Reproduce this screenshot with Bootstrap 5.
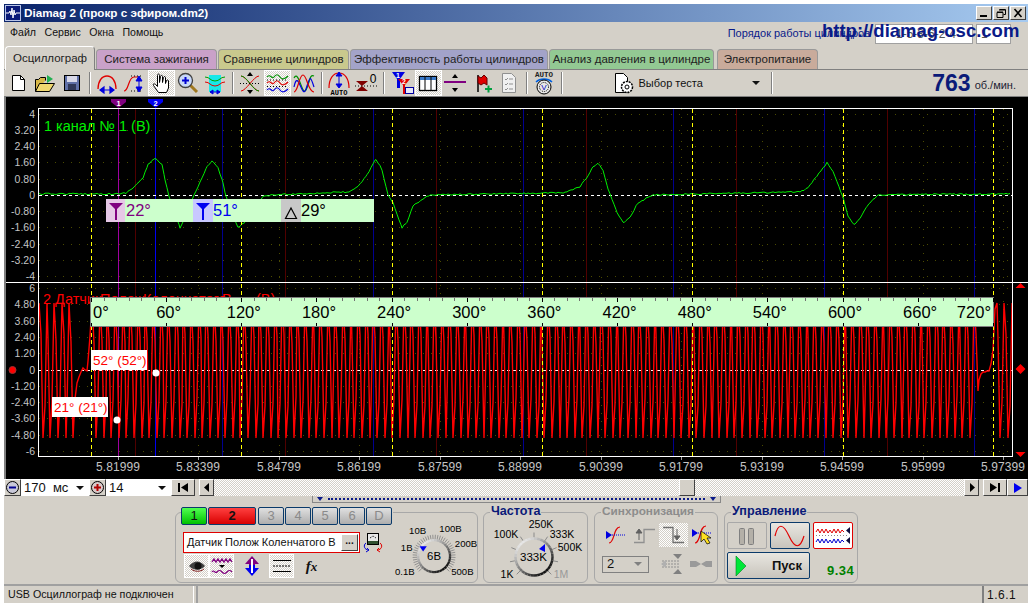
<!DOCTYPE html>
<html lang="ru">
<head>
    <meta charset="UTF-8">
    <title>Diamag 2</title>
    <link href="https://cdn.jsdelivr.net/npm/bootstrap@5.3.0/dist/css/bootstrap.min.css" rel="stylesheet">
    <style>
        html, body { background: #fff; overflow: hidden; }
        body { margin: 0; font-family: "Liberation Sans", Arial, sans-serif; font-size: 11px; color: #111; }
        svg { display: block; }
        .app-win { width: 1024px; height: 599px; margin: 4px 0 0 4px; background: #d4d0c8; position: relative; overflow: hidden; }
        .title-bar { height: 18px; background: linear-gradient(90deg, #0a246a, #a6caf0); color: #fff; font-weight: 700; font-size: 11.7px; padding-left: 1px; }
        .title-ico { width: 16px; height: 16px; margin-right: 3px; }
        .win-btn { width: 16px; height: 14px; background: #d4d0c8; border: 1px solid; border-color: #fff #404040 #404040 #fff; margin-right: 1px; }
        .win-btns { margin-right: 1px; }
        .menu-bar { height: 22px; padding-left: 6px; font-size: 10.600px; }
        .menu-item { margin-right: 8.500px; }
        .order-lbl { color: #0a1a88; margin-left: auto; margin-right: 5px; font-size: 11px; }
        .order-sel { height: 20px; background: #fff; color: #555; border: 1px solid #a0a0a0; padding: 0 4px; font-size: 12px; margin-top: 1px; }
        .order-a { width: 98px; margin-right: 3px; padding-left: 20px; }
        .order-b { width: 35px; margin-right: 17px; }
        .site-url { position: absolute; left: 818px; top: 14px; font-size: 18.500px; font-weight: 700; color: #0a1a88; line-height: 26px; white-space: nowrap; }
        .tab-row { height: 26px; padding: 3px 0 0 1px; gap: 1px; border-bottom: 1px solid #808080; }
        .tab-item { height: 20px; margin-top: 2px; border: 1px solid #999; border-bottom: 0; border-radius: 4px 4px 0 0; text-align: center; line-height: 19px; font-size: 11.500px; color: #222; white-space: nowrap; }
        .tab-on { height: 24px; margin-top: -1px; margin-bottom: -1px; width: 90px; background: #d4d0c8; border-color: #fff #808080 #d4d0c8 #fff; line-height: 23px; z-index: 1; }
        .tab-ign { width: 121px; background: #c9a1c9; }
        .tab-cmp { width: 131px; background: #c9c98d; }
        .tab-eff { width: 198px; background: #a3a3c9; }
        .tab-prs { width: 165px; background: #93c993; }
        .tab-pwr { width: 101px; background: #c9ab9b; margin-left: 2px; }
        .tool-bar { height: 27px; padding-left: .5px; border-bottom: 1px solid #808080; }
        .tb-btn { width: 27px; height: 26px; flex: none; display: flex; align-items: center; justify-content: center; }
        .tb-on { border: 1px solid; border-color: #fff; background-color: #fff; background-image: repeating-conic-gradient(#fff 0 25%, #d4d0c8 0 50%); background-size: 2px 2px; }
        .tb-sep { width: 8px; height: 26px; flex: none; position: relative; }
        .tb-sep::after { content: ""; display: block; width: 2px; height: 22px; margin: 2px 0 0 3px; border-left: 1px solid #808080; border-right: 1px solid #fff; }
        .test-pick { width: 202px; height: 26px; flex: none; padding-left: 46px; font-size: 11px; }
        .test-txt { margin-left: 3px; }
        .arr-dn { width: 0; height: 0; border: 4px solid transparent; border-top-color: #111; border-bottom: 0; flex: none; }
        .rpm-num { font-size: 23px; font-weight: 700; color: #0a1a78; margin-left: auto; line-height: 26px; }
        .rpm-unit { color: #223; margin: 5px 12px 0 4px; font-size: 11px; }
        .scope-box { height: 382px; background: #000; }
        .scroll-row { height: 17px; }
        .sb-btn { height: 17px; background: #d4d0c8; border: 1px solid; border-color: #fff #404040 #404040 #fff; flex: none; display: flex; align-items: center; justify-content: center; padding: 0; }
        .sb-round { width: 17px; }
        .sb-combo { height: 17px; background: #fff; font-size: 13px; padding: 0 5px 0 3px; flex: none; }
        .combo-a { width: 68px; }
        .combo-b { width: 65px; }
        .sb-wide { width: 24px; }
        .sb-thin { width: 15px; }
        .sb-play { width: 21px; }
        .sb-track { flex: 1 1 auto; height: 17px; position: relative; background-image: repeating-conic-gradient(#fff 0 25%, #d4d0c8 0 50%); background-size: 2px 2px; }
        .sb-thumb { position: absolute; left: 465px; top: 0; width: 16px; height: 17px; background: #d4d0c8; border: 1px solid; border-color: #fff #404040 #404040 #fff; }
        .panel-area { height: 88px; }
        .split-strip { width: 409px; height: 7px; margin-left: 308px; border: 1px solid #888; border-top: 0; padding: 0 4px; gap: 5px; }
        .split-dots { flex: 1 1 auto; border-top: 2px dotted #0a1a88; height: 0; }
        .arr-navy { width: 0; height: 0; border: 3px solid transparent; border-top: 4px solid #0a1a88; border-bottom: 0; flex: none; }
        .grp-row { margin: 9px 0 0 171px; gap: 6px; }
        .grp-box { position: relative; height: 71px; border: 1px solid #a8a8a8; border-radius: 6px; flex: none; }
        .grp-chan { width: 303px; margin-right: -1px; }
        .grp-freq { width: 105px; }
        .grp-sync { width: 124px; }
        .grp-ctrl { width: 134px; }
        .grp-title { position: absolute; top: -9px; left: 6px; background: #d4d0c8; padding: 0 1px; font-weight: 700; font-size: 12.600px; line-height: 15px; color: #0a1a78; white-space: nowrap; }
        .title-off { color: #8c8c8c; font-size: 11.800px; }
        .chan-col { width: 217px; flex: none; padding-left: 5px; }
        .chan-row { margin-top: -6px; gap: 1px; height: 18px; background: #d4d0c8; }
        .chan-btn { width: 26px; height: 18px; padding: 0; line-height: 16px; font-size: 13px; border: 1px solid #0a3a6a; border-radius: 2px; color: #8a8a8a; background: linear-gradient(#e0e0e0, #aeaeae); flex: none; }
        .chan-a { background: linear-gradient(#50ff50, #00c000); color: #111; }
        .chan-b { width: 48px; background: linear-gradient(#ff4040, #d80000); color: #111; font-weight: 700; margin-right: 1px; }
        .sensor-line { margin-top: 7px; margin-left: 2px; gap: 3px; }
        .sensor-box { width: 177px; height: 21px; border: 1px solid #e00000; padding-left: 3px; background: #fff; font-size: 11px; white-space: nowrap; flex: none; }
        .dots-btn { width: 17px; height: 17px; margin-left: auto; margin-right: 1px; background: #d4d0c8; border: 1px solid; border-color: #fff #404040 #404040 #fff; text-align: center; font-size: 10px; font-weight: 700; line-height: 11px; }
        .ch-icons { margin: 1px 0 0 3px; height: 24px; }
        .ch-ico { width: 25px; height: 24px; flex: none; display: flex; align-items: center; justify-content: center; }
        .ch-gap { margin-left: 5px; }
        .fx-mark { font-family: "Liberation Serif", serif; font-weight: 700; font-style: italic; font-size: 15px; }
        .sync-row { height: 24px; padding-left: 7px; margin-top: 10px; }
        .sync-row2 { margin-top: 5px; }
        .sync-ico { width: 28.500px; height: 24px; flex: none; display: flex; align-items: center; justify-content: center; }
        .sync-on { background-image: repeating-conic-gradient(#fff 0 25%, #d4d0c8 0 50%); background-size: 2px 2px; }
        .sync-sel { width: 47px; height: 17px; border: 1px solid #808080; padding: 0 6px 0 4px; margin-right: 9px; font-size: 13px; flex: none; }
        .arr-gray { border-top-color: #808080; }
        .ctrl-top { padding: 9px 0 0 2px; gap: 3px; }
        .ctrl-btn { width: 40px; height: 27px; border-radius: 2px; flex: none; display: flex; align-items: center; justify-content: center; }
        .ctrl-off { border: 1px solid #a8a8a8; }
        .ctrl-on { border: 1px solid #0a3a6a; background: linear-gradient(#e8e6e0, #c8c4bc); }
        .ctrl-red { border: 1px solid #e00000; background: #fff; }
        .ctrl-bot { padding: 3px 0 0 2px; }
        .start-btn { width: 83px; height: 27px; border: 1px solid #0a3a6a; border-radius: 2px; background: linear-gradient(#e8e6e0, #c8c4bc); font-weight: 700; font-size: 13px; padding: 0 0 0 7px; flex: none; }
        .start-txt { margin-left: 25px; }
        .time-val { color: #008000; font-weight: 700; font-size: 13px; letter-spacing: .5px; margin: 9px 0 0 17px; }
        .status-bar { height: 19px; border-top: 2px solid #a0a0a0; font-size: 10.700px; }
        .stat-a { width: 190px; padding-left: 4px; border-right: 1px solid #fff; white-space: nowrap; flex: none; }
        .stat-b { flex: 1 1 auto; border-left: 2px solid #a0a0a0; margin-left: 2px; height: 17px; }
        .stat-c { width: 46px; padding-left: 3px; border-left: 2px solid #808080; font-size: 12px; letter-spacing: .5px; }
    </style>
</head>
<body>
<div class="app-win d-flex flex-column">

    <div class="title-bar d-flex align-items-center">
        <svg class="title-ico" viewBox="0 0 16 16"><rect x=".5" y=".5" width="15" height="15" fill="#0a1a78" stroke="#b8c4e8"/><path d="M1 8h3l1-2 1 4 1-7 1 10 1-8 1 5 1-2h4" fill="none" stroke="#fff"/></svg>
        <span>Diamag 2 (прокр с эфиром.dm2)</span>
        <div class="win-btns d-flex ms-auto">
            <div class="win-btn"><svg width="14" height="12"><rect x="3" y="8" width="7" height="2" fill="#000"/></svg></div>
            <div class="win-btn"><svg width="14" height="12"><path d="M5.500 2.500h6v5h-2M3 5.500h6v5H3zM3 5h6M5 3h6" fill="none" stroke="#000"/></svg></div>
            <div class="win-btn"><svg width="14" height="12"><path d="M3.500 2l7 8M10.500 2l-7 8" stroke="#000" stroke-width="1.600"/></svg></div>
        </div>
    </div>

    <div class="menu-bar d-flex align-items-center">
        <span class="menu-item">Файл</span><span class="menu-item">Сервис</span><span class="menu-item">Окна</span><span class="menu-item">Помощь</span>
        <span class="order-lbl">Порядок работы цилиндров</span>
        <div class="order-sel order-a">1-5-3-6-2-4</div>
        <div class="order-sel order-b">1</div>
    </div>
    <div class="site-url">http://diamag-osc.com</div>

    <div class="tab-row d-flex">
        <div class="tab-item tab-on">Осциллограф</div>
        <div class="tab-item tab-ign">Система зажигания</div>
        <div class="tab-item tab-cmp">Сравнение цилиндров</div>
        <div class="tab-item tab-eff">Эффективность работы цилиндров</div>
        <div class="tab-item tab-prs">Анализ давления в цилиндре</div>
        <div class="tab-item tab-pwr">Электропитание</div>
    </div>

    <div class="tool-bar d-flex align-items-center">
        <div class="tb-btn"><svg width="22" height="22"><path d="M5.500 3.500h8l4 4v11h-12z" fill="#fff" stroke="#000"/><path d="M13.500 3.500v4h4" fill="none" stroke="#000"/></svg></div>
        <div class="tb-btn"><svg width="24" height="22"><path d="M2.500 19.500v-12h3l2-2h5v3" fill="#d8b848" stroke="#000"/><path d="M2.500 19.500l4-8h15l-5 8z" fill="#f0d870" stroke="#000"/><path d="M14 3l6 4-6 4z" fill="#20b050"/></svg></div>
        <div class="tb-btn"><svg width="22" height="22"><rect x="3.500" y="3.500" width="15" height="15" fill="#6070a8" stroke="#000"/><rect x="6" y="4" width="10" height="6" fill="#d8d8e8"/><rect x="7" y="12" width="8" height="6" fill="#303858"/></svg></div>
        <div class="tb-sep"></div>
        <div class="tb-btn"><svg width="24" height="22"><path d="M3 17c0-8 4-13 9-13s9 5 9 13" fill="none" stroke="#e00000" stroke-width="1.300"/><path d="M5 18h14M5 18l4-3v6zM19 18l-4-3v6z" fill="#0000e0" stroke="#0000e0" stroke-width="1.200"/></svg></div>
        <div class="tb-btn"><svg width="24" height="22"><path d="M2 19c5 0 4-14 10-14h4" fill="none" stroke="#e00000" stroke-width="1.200"/><path d="M9 4h12M9 19h12" stroke="#000" stroke-dasharray="1 2"/><path d="M17 5v14M17 4l-3 5h6zM17 20l-3-5h6z" fill="#0000e0" stroke="#0000e0"/></svg></div>
        <div class="tb-btn tb-on"><svg width="22" height="24"><path d="M8.500 21.500l-5-7c-1-2 1-2 2-1l2 2v-11c0-2 2-2 2 0v7l1-6c0-1.500 2-1.500 2 0v6l1-5c.5-1.500 2-1 2 0v6l1-3c.5-1 2-.5 2 .5v7l-2 4.500z" fill="#fff" stroke="#000"/></svg></div>
        <div class="tb-btn"><svg width="24" height="24"><path d="M14 14l7 7" stroke="#a07820" stroke-width="3"/><circle cx="9.500" cy="9.500" r="7" fill="#c8d8f8" stroke="#404040" stroke-width="1.300"/><path d="M6 9.500h7M9.500 6v7" stroke="#0000d0" stroke-width="2"/></svg></div>
        <div class="tb-btn"><svg width="24" height="24"><rect x="6" y="4" width="12" height="17" fill="#18e8e8"/><path d="M2 6c5 0 5 4 10 4s5-4 10-4" fill="none" stroke="#00a000"/><path d="M2 11c5 0 5 4 10 4s5-4 10-4" fill="none" stroke="#e00000"/><path d="M7 21h10M7 21l3-2v4zM17 21l-3-2v4z" stroke="#0000e0" fill="#0000e0"/></svg></div>
        <div class="tb-sep"></div>
        <div class="tb-btn"><svg width="24" height="24"><path d="M3 5c5 0 13 15 18 15M3 20c5 0 13-15 18-15" fill="none" stroke="#e00000"/><path d="M3 5c6 0 12 15 18 15" fill="none" stroke="#009000"/><path d="M2 12.500h20" stroke="#000" stroke-dasharray="1 2"/><path d="M12 1l-3 4h6zM12 23l-3-4h6z" fill="#000"/></svg></div>
        <div class="tb-btn tb-on"><svg width="23" height="24"><path d="M1 6c3-4 5 3 7 0s4-3 6 0 5 2 8-1" fill="none" stroke="#009000" stroke-width="1.200"/><path d="M1 12c3-4 5 3 7 0s4-3 6 0 5 2 8-1" fill="none" stroke="#e00000" stroke-width="1.200"/><path d="M1 19c3-4 5 3 7 0s4-3 6 0 5 2 8-1" fill="none" stroke="#0000e0" stroke-width="1.200"/><path d="M1 9h21M1 15.500h21" stroke="#000" stroke-dasharray="1 2"/></svg></div>
        <div class="tb-btn"><svg width="24" height="24"><path d="M2 7c5-9 8 19 12 12s3-16 8-14" fill="none" stroke="#009000" stroke-width="1.200"/><path d="M2 16c4-20 8 14 12 2s4-15 8-2" fill="none" stroke="#0000e0" stroke-width="1.200"/><path d="M2 21c4 0 5-17 9-17s5 17 11 17" fill="none" stroke="#e00000" stroke-width="1.200"/></svg></div>
        <div class="tb-sep"></div>
        <div class="tb-btn"><svg width="26" height="26"><path d="M3 18c0-9 4-15 10-15s10 6 10 15" fill="none" stroke="#e00000" stroke-width="1.200"/><path d="M13 3v14M13 2l-3 4h6zM13 18l-3-4h6z" fill="#0000e0" stroke="#0000e0"/><text x="13" y="25" text-anchor="middle" font-size="7" font-weight="700" font-family="Liberation Mono, monospace">AUTO</text></svg></div>
        <div class="tb-btn"><svg width="26" height="22"><path d="M3 9h12l-6 5zM3 19h12l-6-5z" fill="#800000"/><path d="M2 14h22" stroke="#000" stroke-dasharray="1 2"/><text x="20" y="11" text-anchor="middle" font-size="12">0</text></svg></div>
        <div class="tb-sep"></div>
        <div class="tb-btn"><svg width="27" height="26"><path d="M4 2h13l-5 7v9h-3v-9z" fill="#0000e0"/><path d="M10 9h12l-5 6v9h-2v-9z" fill="#e00000"/><rect x="17.500" y="17.500" width="8" height="6" fill="#e8e8f8" stroke="#0000a0"/><text x="10" y="8" text-anchor="middle" font-size="7" font-weight="700" fill="#fff">1</text><text x="16" y="14" text-anchor="middle" font-size="7" font-weight="700" fill="#fff">2</text></svg></div>
        <div class="tb-btn tb-on"><svg width="22" height="20"><rect x="2.500" y="3.500" width="17" height="14" fill="#fff" stroke="#000" stroke-width="1.300"/><rect x="3" y="4" width="16" height="3" fill="#3878c8"/><path d="M8 4v13M14 4v13" stroke="#000"/></svg></div>
        <div class="tb-btn"><svg width="24" height="22"><rect x="1" y="9" width="22" height="2" fill="#800080"/><path d="M12 2l-3 4h6zM12 20l-3-4h6z" fill="#000"/></svg></div>
        <div class="tb-btn"><svg width="22" height="24"><path d="M7 21V4" stroke="#000" stroke-width="1.500"/><path d="M7 5l3 2 3-3 3 3v7l-3-2-3 2-3-2z" fill="#e00000" stroke="#600000"/><path d="M14 18h7M17.500 14.500v7" stroke="#00a040" stroke-width="2"/></svg></div>
        <div class="tb-btn"><svg width="22" height="24"><path d="M4.500 2.500h9l4 4v15h-13z" fill="#f0f0f0" stroke="#909090"/><path d="M7 8l1 1 2-2M7 13l1 1 2-2M7 18l1 1 2-2M11 8h4M11 13h4M11 18h4" fill="none" stroke="#909090"/></svg></div>
        <div class="tb-sep"></div>
        <div class="tb-btn"><svg width="24" height="26"><text x="12" y="7" text-anchor="middle" font-size="7.500" font-weight="700" font-family="Liberation Mono, monospace" fill="#222">AUTO</text><path d="M4 12c4-4 12-4 16 0" fill="none" stroke="#0060e0" stroke-width="1.500"/><circle cx="12" cy="17" r="7" fill="#e8e8e8" stroke="#000"/><circle cx="12" cy="17" r="4.500" fill="none" stroke="#000" stroke-dasharray="1 1"/><text x="12" y="20" text-anchor="middle" font-size="8" fill="#0000c0">V</text></svg></div>
        <div class="tb-sep"></div>
        <div class="test-pick d-flex align-items-center">
            <svg width="24" height="24"><path d="M3.500 2.500h8l4 4v15h-12z" fill="#fff" stroke="#000"/><circle cx="15" cy="16" r="5.500" fill="#fff" stroke="#000" stroke-dasharray="2 1" stroke-width="1.500"/><circle cx="15" cy="16" r="2" fill="#fff" stroke="#000"/></svg>
            <span class="test-txt">Выбор теста</span>
            <span class="arr-dn ms-auto me-2"></span>
        </div>
        <div class="tb-sep"></div>
        <span class="rpm-num">763</span><span class="rpm-unit">об./мин.</span>
    </div>

    <div class="scope-box">
        <svg id="scope" width="1024" height="382" viewBox="4 97 1024 382" font-family="Liberation Sans, Arial, sans-serif">
            <rect x="4" y="97" width="2" height="382" fill="#808080"/>
            <g id="gridLayer"></g>
            <polyline id="redTrace" fill="none" stroke="#ff0000" stroke-width="1.400"/>
            <polyline id="greenTrace" fill="none" stroke="#00f000"/>
            <g id="overLines"></g>
            <path d="M38.500 108.500h974v348h-974zM6 282.500h1022" fill="none" stroke="#fff" shape-rendering="crispEdges"/>
            <text x="44" y="131" font-size="14.500" fill="#00f000">1 канал № 1 (В)</text>
            <text y="304" font-size="14.500" fill="#ff0000"><tspan x="43">2 Датчик</tspan><tspan x="100">Полож</tspan><tspan x="143">Коленчатого</tspan><tspan x="222">В</tspan><tspan x="256">(В)</tspan></text>

            <path d="M111 99h15v3l-7.500 6-7.500-6z" fill="#800080"/>
            <path d="M148 99h15v3l-7.500 6-7.500-6z" fill="#0000f0"/>
            <text x="118.500" y="106" font-size="7.500" font-weight="700" fill="#fff" text-anchor="middle">1</text>
            <text x="155.500" y="106" font-size="7.500" font-weight="700" fill="#fff" text-anchor="middle">2</text>

            <rect x="106" y="199" width="268" height="23" fill="#ccffcc"/>
            <rect x="106" y="199" width="19" height="23" fill="#e6c8e6"/>
            <rect x="193" y="199" width="20" height="23" fill="#c8c8ff"/>
            <rect x="281" y="199" width="20" height="23" fill="#c8c8c8"/>
            <path d="M109 203h14l-6 6v11h-2v-11z" fill="#800080"/>
            <path d="M196 203h14l-6 6v11h-2v-11z" fill="#0000f0"/>
            <path d="M291 208l-5.500 10.500h11z" fill="none" stroke="#000" stroke-width="1.200"/>
            <text x="126" y="216" font-size="16.500" fill="#800080">22°</text>
            <text x="213" y="216" font-size="16.500" fill="#0000f0">51°</text>
            <text x="301" y="216" font-size="16.500" fill="#000">29°</text>

            <g id="ruler"></g>

            <rect x="91" y="350" width="56" height="20" fill="#fff"/>
            <text x="93" y="365" font-size="13.500" fill="#ff0000">52° (52°)</text>
            <rect x="52" y="397" width="56" height="20" fill="#fff"/>
            <text x="54" y="412" font-size="13.500" fill="#ff0000">21° (21°)</text>
            <circle cx="156" cy="373" r="3.500" fill="#fff"/>
            <circle cx="117" cy="420" r="3.500" fill="#fff"/>

            <circle cx="12.500" cy="370" r="3.500" fill="#ff0000" stroke="#a03030"/>
            <path d="M1020.500 283l5 5h-10zM1020.500 364l5 5-5 5-5-5zM1015.500 452h10l-5 5z" fill="#ff0000"/>
        </svg>
    </div>

    <div class="scroll-row d-flex">
        <div class="sb-btn sb-round"><svg width="15" height="15"><circle cx="7.500" cy="7.500" r="6" fill="#c8c8d8" stroke="#000"/><rect x="4" y="6.500" width="7" height="2" fill="#000090"/></svg></div>
        <div class="sb-combo combo-a d-flex align-items-center justify-content-between"><span>170 &nbsp;мс</span><span class="arr-dn"></span></div>
        <div class="sb-btn sb-round"><svg width="15" height="15"><circle cx="7.500" cy="7.500" r="6" fill="#d8c8c8" stroke="#000"/><path d="M4 7.500h7M7.500 4v7" stroke="#b00000" stroke-width="2"/></svg></div>
        <div class="sb-combo combo-b d-flex align-items-center justify-content-between"><span>14</span><span class="arr-dn"></span></div>
        <div class="sb-btn sb-wide"><svg width="12" height="9"><path d="M1 0h2v9H1zM11 0v9L4 4.500z"/></svg></div>
        <div class="sb-btn sb-thin ms-1"><svg width="6" height="9"><path d="M5 0v9L0 4.500z"/></svg></div>
        <div class="sb-track"><div class="sb-thumb"></div></div>
        <div class="sb-btn sb-thin"><svg width="6" height="9"><path d="M1 0v9l5-4.500z"/></svg></div>
        <div class="sb-btn sb-wide ms-1"><svg width="12" height="9"><path d="M1 0v9l7-4.500zM9 0h2v9H9z"/></svg></div>
        <div class="sb-btn sb-play"><svg width="10" height="10"><path d="M1 0v10l8-5z" fill="#0000f0"/></svg></div>
    </div>

    <div class="panel-area">
        <div class="split-strip d-flex align-items-center"><span class="arr-navy"></span><span class="split-dots"></span><span class="arr-navy"></span></div>
        <div class="grp-row d-flex">

            <div class="grp-box grp-chan d-flex">
                <div class="chan-col">
                    <div class="chan-row d-flex">
                        <button class="btn chan-btn chan-a" type="button">1</button>
                        <button class="btn chan-btn chan-b" type="button">2</button>
                        <button class="btn chan-btn" type="button">3</button>
                        <button class="btn chan-btn" type="button">4</button>
                        <button class="btn chan-btn" type="button">5</button>
                        <button class="btn chan-btn" type="button">6</button>
                        <button class="btn chan-btn" type="button">D</button>
                    </div>
                    <div class="sensor-line d-flex align-items-center">
                        <div class="sensor-box d-flex align-items-center"><span>Датчик Полож Коленчатого В</span><span class="dots-btn">...</span></div>
                        <svg width="20" height="20"><rect x="4.500" y=".5" width="11" height="11" fill="#e8e8e8" stroke="#000"/><rect x="5" y="8" width="10" height="3" fill="#305030"/><path d="M7 5l3-2 3 2" fill="none" stroke="#000" stroke-dasharray="1 1"/><path d="M3 10c-3 2-2 7 3 7M3 19l3-2-2-2" fill="none" stroke="#0000d0"/><path d="M17 10c3 2 2 7-3 7M17 19l-3-2 2-2" fill="none" stroke="#e00000"/></svg>
                    </div>
                    <div class="ch-icons d-flex">
                        <div class="ch-ico tb-on"><svg width="20" height="16"><path d="M2 8c5-6 11-6 16 0-5 5-11 5-16 0z" fill="#404040"/><circle cx="11" cy="8" r="3.500" fill="#111"/><path d="M4 11c4 3 9 3 13 0" fill="none" stroke="#802020"/></svg></div>
                        <div class="ch-ico tb-on"><svg width="22" height="20"><path d="M1 6l2-3 2 3 2-3 2 3 2-3 2 3 2-3 2 3 2-3 2 3" fill="none" stroke="#800080" stroke-width="1.300"/><path d="M1 16c2-3 3 2 5 0s3-2 5 0 3 2 5 0 3-2 5 0" fill="none" stroke="#800080" stroke-width="1.200"/><path d="M8 9h6l-3 3z" fill="#000"/></svg></div>
                        <div class="ch-ico ch-gap"><svg width="18" height="22"><path d="M9 1L2 9h4v3h6V9h4z" fill="#800080"/><path d="M9 21l7-8h-4v-3H6v3H2z" fill="#0000f0"/><path d="M9 4v14" stroke="#fff" stroke-width="2"/></svg></div>
                        <div class="ch-ico tb-on ch-gap"><svg width="20" height="16"><path d="M1 2.500h18M1 13.500h18" stroke="#000"/><path d="M1 8h18" stroke="#000" stroke-dasharray="2 1"/></svg></div>
                        <div class="ch-ico ch-gap"><span class="fx-mark">f<small>x</small></span></div>
                    </div>
                </div>
                <svg class="ms-auto" width="92" height="69" viewBox="385 513 92 69" font-family="Liberation Sans, Arial, sans-serif" font-size="10.500" id="voltDial" text-anchor="middle">
                    <text x="412" y="533">10В</text><text x="448" y="531">100В</text><text x="400" y="551">1В</text><text x="465" y="547">200В</text><text x="398" y="578">0.1В</text><text x="461" y="578">500В</text>
                    <text x="430" y="561" font-size="12.500">6В</text>
                </svg>
            </div>

            <div class="grp-box grp-freq">
                <span class="grp-title">Частота</span>
                <svg width="103" height="69" viewBox="484 513 103 69" font-family="Liberation Sans, Arial, sans-serif" font-size="10.500" id="freqDial" text-anchor="middle">
                    <text x="541" y="528">250K</text><text x="506" y="538">100K</text><text x="562" y="538">333K</text><text x="570" y="551">500K</text><text x="507" y="578">1K</text><text x="561" y="578" fill="#999">1M</text>
                    <text x="533.500" y="561" font-size="11.500">333K</text>
                </svg>
            </div>

            <div class="grp-box grp-sync">
                <span class="grp-title title-off">Синхронизация</span>
                <div class="sync-row d-flex">
                    <div class="sync-ico"><svg width="24" height="22"><path d="M5 19c6 0 4-16 11-16" fill="none" stroke="#e00000" stroke-width="1.200"/><path d="M4 11h18" stroke="#0000e0" stroke-dasharray="1 1"/><path d="M2 7l6 4-6 4z" fill="#0000e0"/></svg></div>
                    <div class="sync-ico"><svg width="24" height="22"><path d="M1 18.500h10v-13h11" fill="none" stroke="#909090" stroke-width="1.300"/><path d="M6 5l-3 4h6zM6 16V9" fill="#606060" stroke="#606060"/></svg></div>
                    <div class="sync-ico sync-on"><svg width="24" height="22"><path d="M2 3.500h10v15h11" fill="none" stroke="#707070" stroke-width="1.300"/><path d="M16 16l-3-4h6zM16 5v8" fill="#606060" stroke="#606060"/></svg></div>
                    <div class="sync-ico"><svg width="24" height="24"><path d="M5 20c6 0 4-17 11-17" fill="none" stroke="#e00000" stroke-width="1.200"/><path d="M4 10h18" stroke="#0000e0" stroke-dasharray="1 1"/><path d="M2 6l6 4-6 4z" fill="#0000e0"/><path d="M11 8v11l3-3 3 5 3-1-3-5h4z" fill="#ffe020" stroke="#000" stroke-width=".7"/></svg></div>
                </div>
                <div class="sync-row sync-row2 d-flex align-items-center">
                    <div class="sync-sel d-flex align-items-center justify-content-between"><span>2</span><span class="arr-dn arr-gray"></span></div>
                    <div class="sync-ico"><svg width="24" height="22"><path d="M13 1h9l-4 5zM13 21h9l-4-5z" fill="#808080"/><path d="M2 8h17M2 11h17M2 14h17" stroke="#909090" stroke-dasharray="2 1"/><path d="M1 11l5-4v8z" fill="#b0b0b0"/></svg></div>
                    <div class="sync-ico"><svg width="24" height="22"><path d="M1 8v6h6l5-3-5-3zM23 8v6h-6l-5-3 5-3z" fill="#9a9a9a"/></svg></div>
                </div>
            </div>

            <div class="grp-box grp-ctrl">
                <span class="grp-title">Управление</span>
                <div class="ctrl-top d-flex">
                    <div class="ctrl-btn ctrl-off"><svg width="18" height="20"><rect x="1.500" y="2.500" width="5" height="16" rx="1" fill="#b4b0a8" stroke="#808080"/><rect x="10.500" y="2.500" width="5" height="16" rx="1" fill="#b4b0a8" stroke="#808080"/></svg></div>
                    <div class="ctrl-btn ctrl-on"><svg width="34" height="25"><path d="M2 13c3-13 8-13 14 0s11 13 15 0" fill="none" stroke="#e00000" stroke-width="1.200"/></svg></div>
                    <div class="ctrl-btn ctrl-red"><svg width="36" height="25"><path d="M1 9l2-3 2 4 2-4 2 4 2-4 2 4 2-3 2 3 2-4 2 4 2-4 2 4 2-3 2 2" fill="none" stroke="#e00000"/><path d="M1 19l2-3 2 4 2-4 2 4 2-4 2 4 2-3 2 3 2-4 2 4 2-4 2 4 2-3 2 2" fill="none" stroke="#0000d0"/><path d="M1 12.500h32" stroke="#888" stroke-dasharray="1 2"/><path d="M35 4v7l-4-3.500zM35 14v7l-4-3.500z" fill="#101040"/></svg></div>
                </div>
                <div class="ctrl-bot d-flex">
                    <div class="start-btn d-flex align-items-center"><svg width="12" height="22"><path d="M1 1v20l10-10z" fill="#00e838" stroke="#008020" stroke-width=".6"/></svg><span class="start-txt">Пуск</span></div>
                    <span class="time-val">9.34</span>
                </div>
            </div>
        </div>
    </div>

    <div class="status-bar d-flex align-items-center">
        <div class="stat-a">USB Осциллограф не подключен</div>
        <div class="stat-b"></div>
        <div class="stat-c">1.6.1</div>
    </div>
</div>

<script src="https://cdn.jsdelivr.net/npm/bootstrap@5.3.0/dist/js/bootstrap.bundle.min.js"></script>
<script>
    const NS = 'http://www.w3.org/2000/svg';

    function add(parent, tag, attrs, text) {
        const el = document.createElementNS(NS, tag);
        for (const k in attrs) el.setAttribute(k, attrs[k]);
        if (text !== undefined) el.textContent = text;
        parent.appendChild(el);
        return el;
    }

    // small fixed generator so the noise is the same on every load
    let seed = 12345;
    function rnd() {
        seed = (seed * 16807) % 2147483647;
        return seed / 2147483647;
    }

    // grid, axis labels, cursor lines
    const grid = document.getElementById('gridLayer');
    const over = document.getElementById('overLines');
    const labels1 = ['4', '3.20', '2.40', '1.60', '0.80', '0', '-0.80', '-1.60', '-2.40', '-3.20', '-4'];
    const labels2 = ['6', '4.80', '3.60', '2.40', '1.20', '0', '-1.20', '-2.40', '-3.60', '-4.80', '-6'];
    const xVals = ['5.81999', '5.83399', '5.84799', '5.86199', '5.87599', '5.88999', '5.90399', '5.91799', '5.93199', '5.94599', '5.95999', '5.97399'];

    labels1.forEach((t, i) => {
        const y = Math.round(113.5 + i * 16.25);
        if (t !== '0') add(grid, 'path', { d: `M39 ${y + .5}H1012`, stroke: '#4a4a00', 'stroke-dasharray': '1 7', 'shape-rendering': 'crispEdges' });
        add(grid, 'text', { x: 35, y: y + 4, 'text-anchor': 'end', 'font-size': 10.5, fill: '#c4c4c4' }, t);
    });
    labels2.forEach((t, i) => {
        const y = Math.round(288 + i * 16.3);
        if (t !== '0') add(grid, 'path', { d: `M39 ${y + .5}H1012`, stroke: '#4a4a00', 'stroke-dasharray': '1 7', 'shape-rendering': 'crispEdges' });
        add(grid, 'text', { x: 35, y: y + 4, 'text-anchor': 'end', 'font-size': 10.5, fill: '#c4c4c4' }, t);
    });
    xVals.forEach((t, i) => {
        const x = Math.round(118 + i * 80.45);
        if (i > 0) add(grid, 'path', { d: `M${x + .5} 109V456`, stroke: '#4a4a00', 'stroke-dasharray': '1 7', 'shape-rendering': 'crispEdges' });
        add(grid, 'path', { d: `M${x + .5} 457v3`, stroke: '#a0a0a0', 'shape-rendering': 'crispEdges' });
        add(grid, 'text', { x: x, y: 471, 'text-anchor': 'middle', 'font-size': 12, 'letter-spacing': '.1', fill: '#c4c4c4' }, t);
    });

    [135, 285, 436, 586, 736, 887].forEach(x => add(grid, 'path', { d: `M${x + .5} 109V456`, stroke: '#500000', 'shape-rendering': 'crispEdges' }));
    [222, 373, 523, 673, 824, 974].forEach(x => add(grid, 'path', { d: `M${x + .5} 109V456`, stroke: '#000090', 'shape-rendering': 'crispEdges' }));
    add(grid, 'path', { d: 'M155.500 108V456', stroke: '#0000f0', 'shape-rendering': 'crispEdges' });
    add(grid, 'path', { d: 'M118.500 108V456', stroke: '#a000a0', 'shape-rendering': 'crispEdges' });
    add(grid, 'path', { d: 'M39 195.500H1012M39 370.500H1012', stroke: '#fff', 'stroke-dasharray': '3 3', 'shape-rendering': 'crispEdges' });
    [91, 241, 392, 542, 692, 843, 993].forEach(x => add(over, 'path', { d: `M${x + .5} 109V456`, stroke: '#ffff00', 'stroke-dasharray': '4 3', 'shape-rendering': 'crispEdges' }));

    // channel 1, key points read off the trace
    const greenKeys = [[39,194],[120,194],[126,193],[133,188],[143,178],[148,165],[155,158],[162,165],[165,180],[169,197],[180,228],[186,216],[194,195],[207,167],[212,161],[218,168],[223,183],[226,197],[238,228],[245,222],[263,197],[273,195],[350,192],[358,187],[367,175],[376,159],[382,170],[388,195],[393,203],[402,228],[407,222],[413,206],[423,199],[430,195],[563,193],[580,187],[588,176],[593,167],[598,164],[603,170],[608,189],[617,213],[624,223],[630,217],[638,203],[653,195],[800,192],[808,188],[817,176],[827,163],[833,172],[843,197],[848,216],[854,225],[860,218],[867,206],[878,195],[1012,194]];
    const greenPts = [];
    for (let k = 0; k < greenKeys.length - 1; k++) {
        const [x0, y0] = greenKeys[k], [x1, y1] = greenKeys[k + 1];
        for (let x = x0; x < x1; x += 2) {
            const y = y0 + (y1 - y0) * (x - x0) / (x1 - x0);
            greenPts.push(x + ',' + (y + (rnd() - .6) * 1.4).toFixed(1));
        }
    }
    document.getElementById('greenTrace').setAttribute('points', greenPts.join(' '));

    // channel 2, fast oscillation with the two quiet gaps
    const gap1 = [[75,400],[77,383],[82,368],[87,371],[89,357],[91,325]];
    const gap2 = [[977,395],[979,382],[982,372],[990,371],[993,348],[995,302]];
    function inGap(keys, x) {
        for (let k = 0; k < keys.length - 1; k++) {
            if (x >= keys[k][0] && x <= keys[k + 1][0]) {
                return keys[k][1] + (keys[k + 1][1] - keys[k][1]) * (x - keys[k][0]) / (keys[k + 1][0] - keys[k][0]);
            }
        }
        return null;
    }
    const redPts = [];
    let cycle = -1, amp = 70;
    for (let x = 39; x < 1012; x += 1.9) {
        let y = inGap(gap1, x);
        if (y === null) y = inGap(gap2, x);
        if (y === null) {
            const c = Math.floor(x / 7.6);
            if (c !== cycle) {
                cycle = c;
                amp = 78 + rnd() * 30;
            }
            y = 370 - amp * Math.sin(x / 7.6 * 2 * Math.PI + .4);
            y = Math.max(303, Math.min(438, y));
        }
        redPts.push(Math.round(x) + ',' + Math.round(y));
    }
    document.getElementById('redTrace').setAttribute('points', redPts.join(' '));

    // degree ruler over the second channel
    const ruler = document.getElementById('ruler');
    add(ruler, 'rect', { x: 90.5, y: 297.5, width: 903, height: 29, fill: '#ccffcc', stroke: '#808080', 'shape-rendering': 'crispEdges' });
    for (let d = 0; d <= 720; d += 10) {
        const x = Math.round(91 + d * 1.2525) + .5;
        const major = d % 60 === 0;
        add(ruler, 'path', { d: `M${x} 298v${major ? 4 : 3}`, stroke: major ? '#000' : '#707070', 'shape-rendering': 'crispEdges' });
        if (major) add(ruler, 'path', { d: `M${x} 326v-3`, stroke: '#000', 'shape-rendering': 'crispEdges' });
        if (major) {
            const label = d + '°';
            if (d === 0) add(ruler, 'text', { x: 93, y: 318, 'font-size': 16.5 }, label);
            else if (d === 720) add(ruler, 'text', { x: 991, y: 318, 'font-size': 16.5, 'text-anchor': 'end' }, label);
            else add(ruler, 'text', { x: 93.5 + d * 1.2525, y: 318, 'font-size': 16.5, 'text-anchor': 'middle' }, label);
        }
    }

    // round dials: tick ring, rim lit from the top left, pointer
    function dial(svgId, cx, cy, r, ticks, pointer) {
        const svg = document.getElementById(svgId);
        for (let i = 0; i < ticks; i++) {
            const a = (135 + i * 270 / (ticks - 1)) * Math.PI / 180;
            add(svg, 'line', { x1: cx + (r + 1) * Math.cos(a), y1: cy + (r + 1) * Math.sin(a), x2: cx + (r + 6) * Math.cos(a), y2: cy + (r + 6) * Math.sin(a), stroke: '#8a8a8a' });
        }
        for (let s = 0; s < 36; s++) {
            const a0 = s * 10 * Math.PI / 180, a1 = (s + 1) * 10 * Math.PI / 180;
            const g = Math.round(125 - 105 * Math.cos(a0 - Math.PI / 4));
            add(svg, 'path', { d: `M${cx + r * Math.cos(a0)} ${cy + r * Math.sin(a0)}L${cx + r * Math.cos(a1)} ${cy + r * Math.sin(a1)}`, stroke: `rgb(${g},${g},${g})`, 'stroke-width': 2.5 });
        }
        add(svg, 'path', { d: pointer, fill: '#0000f0' });
    }
    dial('voltDial', 430, 557, 17.5, 40, 'M414 546h8l-4 6z');
    dial('freqDial', 534, 557, 18.5, 9, 'M545 544v8l-6-3z');
</script>
</body>
</html>
